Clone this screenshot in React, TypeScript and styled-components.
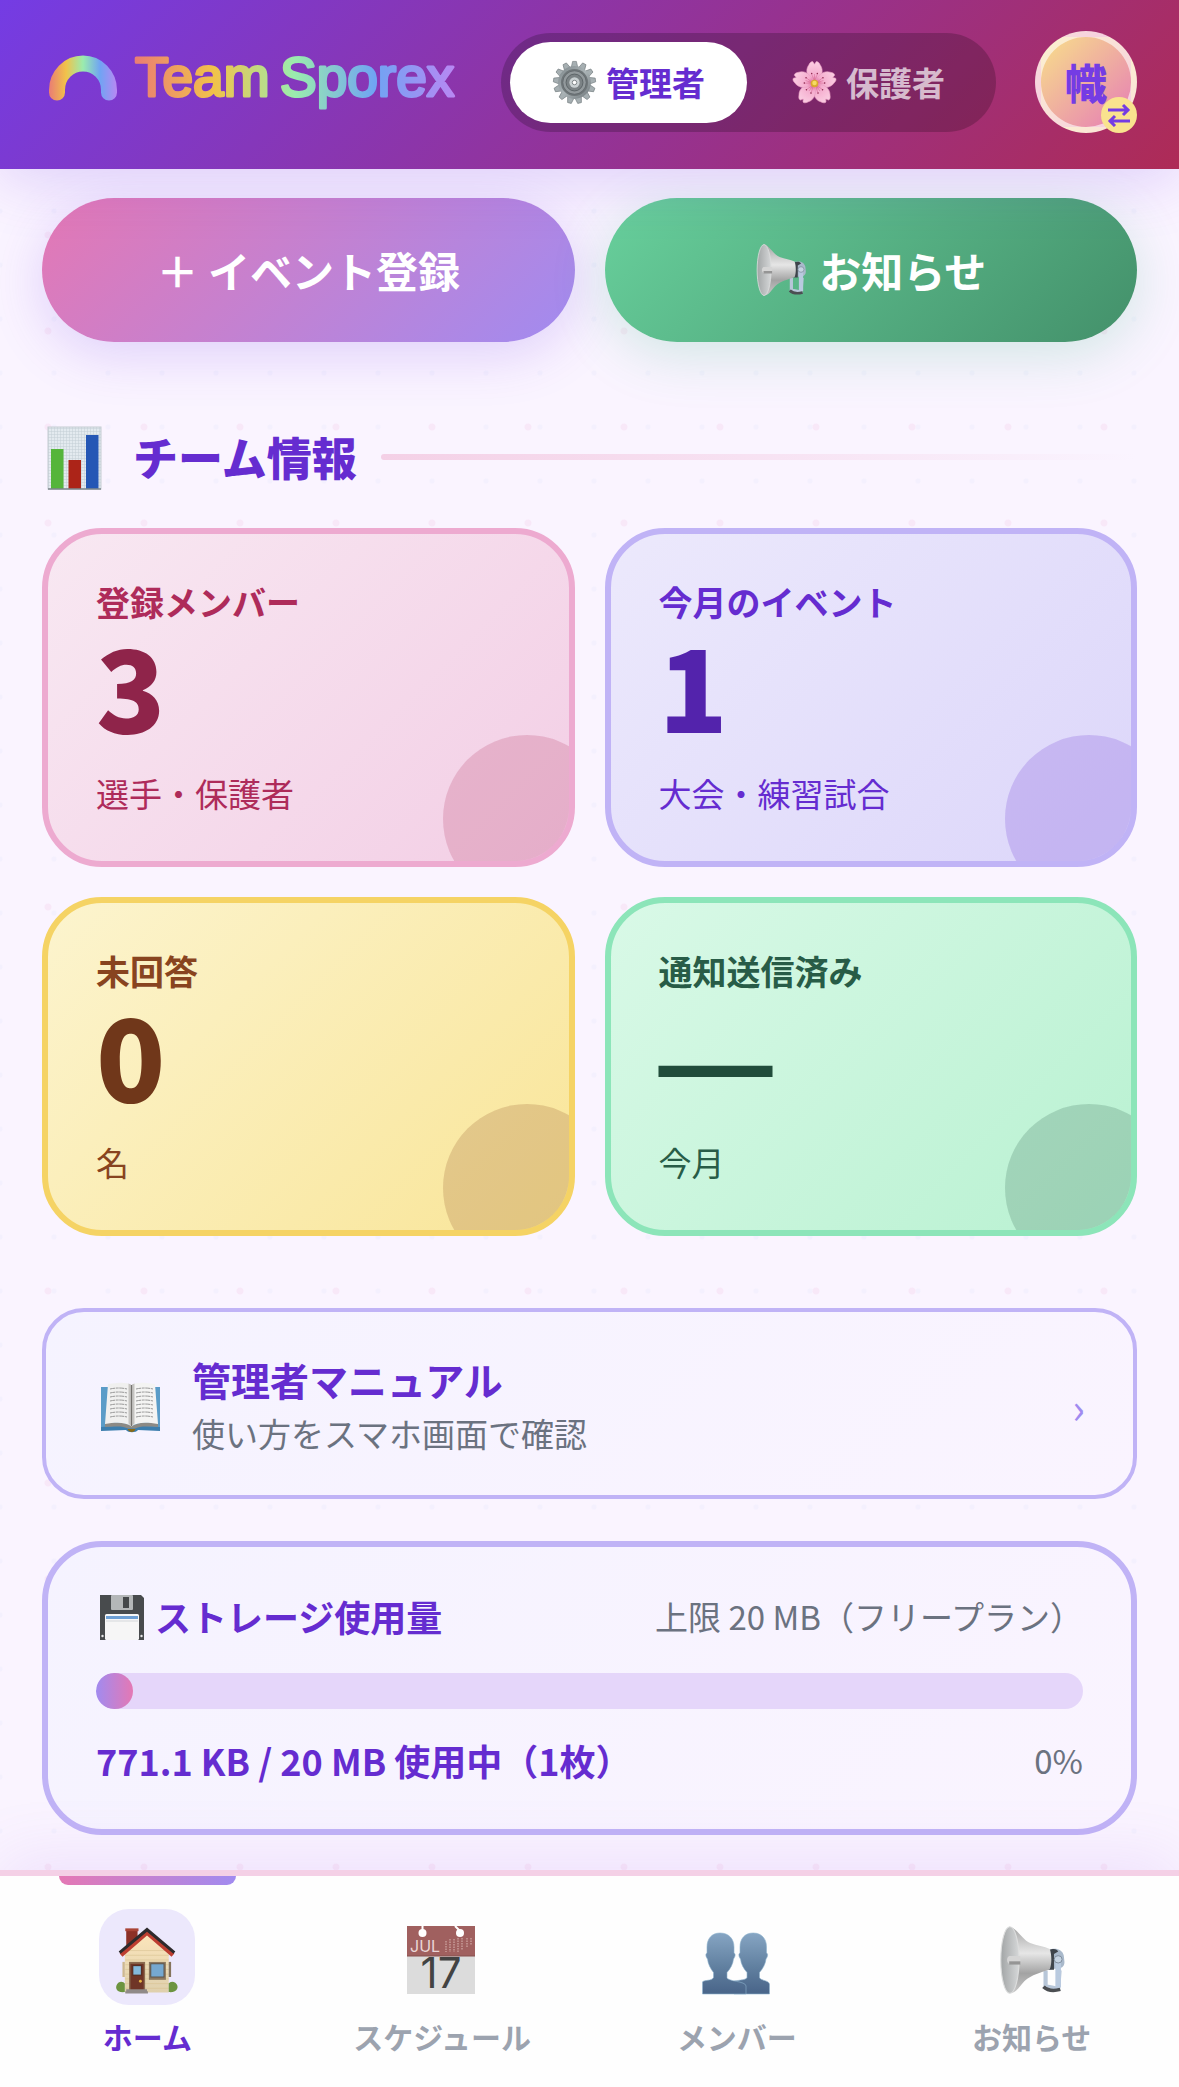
import React from 'react';
import styled, { createGlobalStyle } from 'styled-components';

const GlobalStyle = createGlobalStyle`
  *, *::before, *::after { box-sizing: border-box; }
  body {
    margin: 0;
    background: #faf4ff;
    font-family: "Noto Sans CJK JP", "Noto Sans", sans-serif;
  }
  button { font-family: inherit; border: 0; padding: 0; cursor: pointer; }
  a { color: inherit; text-decoration: none; }
  h2, h3, p { margin: 0; }
  svg { display: block; flex: none; }
`;

const Page = styled.div`
  min-height: 100vh;
  display: flex;
  flex-direction: column;
  background-color: #faf4ff;
  background-image:
    radial-gradient(circle, #f8e8f8 3px, transparent 4px),
    radial-gradient(circle, #f4f0fe 2px, transparent 3px);
  background-size: 96px 96px, 54px 54px;
  background-position: 0 91px, 27px 22px;
`;

/* ---------- Header ---------- */

const Header = styled.header`
  position: relative;
  z-index: 2;
  display: flex;
  align-items: center;
  padding: 31px 42px 36px;
  background: linear-gradient(135deg, #743ce4 0%, #ae2b56 100%);
  box-shadow: 0 12px 60px rgba(116, 60, 228, 0.2);
`;

const LogoLink = styled.a`
  margin-right: auto;
`;

const RoleSwitch = styled.div`
  display: flex;
  gap: 3px;
  padding: 9px;
  margin-right: 39px;
  border-radius: 50px;
  background: rgba(0, 0, 0, 0.2);
`;

const RoleButton = styled.button<{ $active?: boolean }>`
  display: flex;
  align-items: center;
  gap: 9px;
  height: 81px;
  padding: 0 42px;
  border-radius: 42px;
  font-size: 33px;
  font-weight: 700;
  line-height: 48px;
  background: ${(p) => (p.$active ? '#fff' : 'transparent')};
  color: ${(p) => (p.$active ? '#652cd0' : 'rgba(255, 255, 255, 0.7)')};
`;

const Avatar = styled.button`
  position: relative;
  width: 102px;
  height: 102px;
  border: 6px solid rgba(255, 255, 255, 0.6);
  border-radius: 50%;
  background: linear-gradient(135deg, #f8e08a, #e67cb6);
  color: #743ce4;
  font-size: 42px;
  font-weight: 900;
  line-height: 60px;
`;

const AvatarBadge = styled.span`
  position: absolute;
  right: -6px;
  bottom: -6px;
  display: grid;
  place-items: center;
  width: 36px;
  height: 36px;
  border-radius: 50%;
  background: #f9e38e;
`;

/* ---------- Main ---------- */

const Main = styled.main`
  flex: 1;
  padding: 29px 42px 35px;
`;

const TwoColumns = styled.div`
  display: grid;
  grid-template-columns: 1fr 1fr;
  gap: 30px;
`;

const ActionButton = styled.button<{ $from: string; $to: string; $shadow: string }>`
  display: flex;
  align-items: center;
  justify-content: center;
  gap: 12px;
  height: 144px;
  border-radius: 72px;
  background: linear-gradient(135deg, ${(p) => p.$from}, ${(p) => p.$to});
  box-shadow: 0 12px 54px ${(p) => p.$shadow};
  color: #fff;
  font-size: 42px;
  font-weight: 700;
  line-height: 60px;
`;

const SectionHeader = styled.div`
  display: flex;
  align-items: center;
  margin: 80px 0 36px;
`;

const SectionTitle = styled.h2`
  margin: 0 24px 0 27px;
  color: #652cd0;
  font-size: 45px;
  font-weight: 900;
  line-height: 66px;
`;

const SectionRule = styled.span`
  flex: 1;
  height: 6px;
  border-radius: 3px;
  background: linear-gradient(90deg, #f4d0e6, rgba(244, 208, 230, 0));
`;

type Tone = { from: string; to: string; border: string; text: string; strong: string };

const StatCard = styled.section<{ $tone: Tone }>`
  position: relative;
  overflow: hidden;
  padding: 42px 48px;
  border: 6px solid ${(p) => p.$tone.border};
  border-radius: 60px;
  background: linear-gradient(135deg, ${(p) => p.$tone.from}, ${(p) => p.$tone.to});
  color: ${(p) => p.$tone.text};

  &::after {
    content: "";
    position: absolute;
    right: -42px;
    bottom: -42px;
    width: 168px;
    height: 168px;
    border-radius: 50%;
    background: currentColor;
    opacity: 0.2;
  }
`;

const StatLabel = styled.h3`
  font-size: 34px;
  font-weight: 700;
  line-height: 51px;
`;

const StatValue = styled.p<{ $color: string }>`
  color: ${(p) => p.$color};
  font-size: 114px;
  font-weight: 900;
  line-height: 114px;
`;

const EmptyValue = styled.span`
  font-family: "Liberation Sans", Arial, sans-serif;
  line-height: 0;
`;

const StatNote = styled.p`
  margin-top: 27px;
  font-size: 33px;
  line-height: 51px;
`;

const ManualLink = styled.a`
  display: flex;
  align-items: center;
  gap: 32px;
  margin-top: 72px;
  padding: 40px 48px 35px;
  border: 4px solid #c0b3f6;
  border-radius: 42px;
  background: linear-gradient(135deg, #f5f3ff, #faf4ff);
`;

const ManualText = styled.span`
  flex: 1;
  display: flex;
  flex-direction: column;
`;

const ManualTitle = styled.strong`
  color: #652cd0;
  font-size: 39px;
  font-weight: 700;
  line-height: 54px;
`;

const Muted = styled.span`
  color: #6b7280;
  font-size: 33px;
  line-height: 54px;
`;

const Chevron = styled.span`
  color: #a18bf0;
  font-size: 42px;
  line-height: 54px;
`;

const StorageCard = styled.section`
  margin-top: 42px;
  padding: 42px 48px;
  border: 6px solid #c0b3f6;
  border-radius: 60px;
  background: linear-gradient(135deg, #f5f3ff, #faf4ff);
`;

const StorageRow = styled.div`
  display: flex;
  align-items: center;
  justify-content: space-between;
`;

const StorageTitle = styled.h3`
  display: flex;
  align-items: center;
  gap: 8px;
  color: #652cd0;
  font-size: 36px;
  font-weight: 700;
  line-height: 54px;
`;

const StorageUsed = styled.p`
  color: #652cd0;
  font-size: 36px;
  font-weight: 700;
  line-height: 54px;
`;

const Track = styled.div`
  height: 36px;
  margin: 30px 0 24px;
  border-radius: 18px;
  overflow: hidden;
  background: #e5d6fa;
`;

const TrackFill = styled.div`
  height: 100%;
  border-radius: 18px;
  background: linear-gradient(90deg, #a18bf0, #e478b4);
`;

/* ---------- Bottom navigation ---------- */

const BottomNav = styled.nav`
  position: sticky;
  bottom: 0;
  z-index: 2;
  display: grid;
  grid-template-columns: repeat(4, 1fr);
  border-top: 6px solid #f4d0e6;
  background: #fefefe;
  box-shadow: 0 -12px 60px rgba(160, 90, 228, 0.12);
`;

const NavItem = styled.a<{ $active?: boolean }>`
  position: relative;
  display: flex;
  flex-direction: column;
  align-items: center;
  gap: 10px;
  padding: 33px 0 30px;
  color: ${(p) => (p.$active ? '#652cd0' : '#9ca3af')};
  font-size: 30px;
  font-weight: 700;
  line-height: 42px;

  &::before {
    content: "";
    display: ${(p) => (p.$active ? 'block' : 'none')};
    position: absolute;
    top: 0;
    left: 20%;
    width: 60%;
    height: 9px;
    border-radius: 0 0 9px 9px;
    background: linear-gradient(90deg, #e478b4, #a18bf0);
  }
`;

const NavIcon = styled.span<{ $active?: boolean }>`
  display: grid;
  place-items: center;
  width: 96px;
  height: 96px;
  padding-top: 6px;
  border-radius: 30px;
  background: ${(p) => (p.$active ? '#ece8fc' : 'transparent')};
`;

/* ---------- Drawings ---------- */

const RainbowStops = () => (
  <>
    <stop offset="0" stopColor="#ea7c74" />
    <stop offset="0.25" stopColor="#f1c24a" />
    <stop offset="0.5" stopColor="#9aecae" />
    <stop offset="0.75" stopColor="#70a4f3" />
    <stop offset="1" stopColor="#b888f3" />
  </>
);

const Logo = () => (
  <svg width="420" height="102" viewBox="0 -21 420 102" role="img" aria-label="TeamSporex">
    <defs>
      <linearGradient id="arcFill" gradientUnits="userSpaceOnUse" x1="7" y1="0" x2="75" y2="0">
        <RainbowStops />
      </linearGradient>
      <linearGradient id="wordFill" gradientUnits="userSpaceOnUse" x1="92" y1="0" x2="413" y2="0">
        <RainbowStops />
      </linearGradient>
    </defs>
    <path d="M15 40.5V38A26 26.5 0 0 1 67 38V40.5" fill="none" stroke="url(#arcFill)" strokeWidth="16" strokeLinecap="round" />
    <g fontFamily="Liberation Sans, Arial, sans-serif" fontSize="55" fontWeight="400" fill="url(#wordFill)" stroke="url(#wordFill)" strokeWidth="3" strokeLinejoin="round">
      <text x="93" y="44">Team</text>
      <text x="238" y="44">Sporex</text>
    </g>
  </svg>
);

const SwapIcon = () => (
  <svg width="24" height="24" viewBox="0 0 24 24" fill="none" stroke="#743ce4" strokeWidth="3">
    <path d="M1 7H22M16 2l5 5-5 5M23 18H2M8 13l-5 5 5 5" />
  </svg>
);

const Gear = () => (
  <svg width="45" height="45" viewBox="0 0 48 48" aria-hidden="true">
    <defs>
      <linearGradient id="gearFill" x1="0" y1="0" x2="1" y2="1">
        <stop offset="0" stopColor="#7c8589" />
        <stop offset="0.5" stopColor="#aab3b6" />
        <stop offset="1" stopColor="#6d7579" />
      </linearGradient>
    </defs>
    {Array.from({ length: 13 }, (_, i) => (
      <path key={i} d="M20.5 8l1.5-6.5h4L27.5 8z" fill="#a6afb2" stroke="#747d80" strokeWidth="0.7" transform={`rotate(${(i * 360) / 13} 24 24)`} />
    ))}
    <circle cx="24" cy="24" r="17.5" fill="url(#gearFill)" />
    <circle cx="24" cy="24" r="14.5" fill="#6f7679" />
    <circle cx="24" cy="24" r="12.5" fill="#92999c" stroke="#5b6265" strokeWidth="0.8" />
    <circle cx="24" cy="24" r="9" fill="#7b8285" stroke="#5b6265" strokeWidth="1" />
    <circle cx="24" cy="24" r="5.5" fill="#c9d0d2" />
    <circle cx="24" cy="24" r="2.4" fill="#fff" stroke="#62696c" strokeWidth="0.8" />
  </svg>
);

const Blossom = () => (
  <svg width="45" height="45" viewBox="0 0 48 48" aria-hidden="true">
    <defs>
      <radialGradient id="petalFill" gradientUnits="userSpaceOnUse" cx="24" cy="25" r="23">
        <stop offset="0.1" stopColor="#e0709f" />
        <stop offset="0.35" stopColor="#f4abcd" />
        <stop offset="1" stopColor="#fbcde2" />
      </radialGradient>
    </defs>
    {[0, 72, 144, 216, 288].map((a) => (
      <g key={a} transform={`rotate(${a} 24 25)`}>
        <path d="M24 25C16 19 13.5 11 18 5c1.500-3 3-3.500 4.300-3.200L24 4.500l1.700-2.700C27 1.500 28.500 2 30 5c4.500 6 2 14-6 20z" fill="url(#petalFill)" stroke="#e79cc0" strokeWidth="0.6" />
        <path d="M24 23V15M24 23l-3-8M24 23l3-8" stroke="#d4628f" strokeWidth="0.5" />
        <circle cx="21" cy="14.5" r="0.8" fill="#8e2b50" />
        <circle cx="27" cy="14.5" r="0.8" fill="#8e2b50" />
      </g>
    ))}
    <circle cx="24" cy="25" r="4" fill="#d9a92e" />
    <circle cx="24" cy="24.5" r="2.4" fill="#f6dc62" />
  </svg>
);

const Megaphone = ({ size, id }: { size: number; id: string }) => (
  <svg width={size} height={size} viewBox="0 0 52 52" aria-hidden="true">
    <defs>
      <linearGradient id={`${id}Cone`} x1="0" y1="0" x2="0" y2="1">
        <stop offset="0" stopColor="#a5a5a5" />
        <stop offset="0.4" stopColor="#e6e6e6" />
        <stop offset="0.7" stopColor="#a3a3a3" />
        <stop offset="1" stopColor="#c9c9c9" />
      </linearGradient>
      <linearGradient id={`${id}Bell`} x1="0" y1="0" x2="1" y2="0">
        <stop offset="0" stopColor="#a2a5a6" />
        <stop offset="1" stopColor="#d5d7d8" />
      </linearGradient>
    </defs>
    <g transform="scale(1.07 1)">
      <path d="M34 34v12l9 2 1-14" fill="none" stroke="#b7c6d8" strokeWidth="3" />
      <path d="M32.500 46.500c3 3 7 3.500 12 2" fill="none" stroke="#4b4e52" strokeWidth="2.6" />
      <path d="M36 18.500c5-2.500 10-.5 11 4l.5 5c0 4-2.500 5-5.500 5l-6 1z" fill="#a9b9cb" />
      <path d="M36 18.500c4-1.500 6-1 7 1l-3 2v12h-4z" fill="#3e444b" />
      <path d="M41 24h4v23H41z" fill="#b9cadf" />
      <circle cx="43" cy="25.5" r="2.8" fill="#c6d4e3" stroke="#7d8b9b" strokeWidth="0.7" />
      <path d="M8 0.500c5 0 9 10 15 12.500 5 2 10 2.500 14 4.500 1.500 4.500 1.500 12 0 15.500C31 35.500 24 37 19 42c-3.500 3.500-5.500 9.500-11 9.500z" fill={`url(#${id}Cone)`} />
      <ellipse cx="8.500" cy="26" rx="6.500" ry="25.500" fill={`url(#${id}Bell)`} stroke="#dcdddd" strokeWidth="0.8" />
      <path d="M8 23h8v6H8c-2-1-2-5 0-6z" fill="#d5d5d5" />
      <path d="M8 27h8v2.500H8z" fill="#959595" />
    </g>
  </svg>
);

const BarChart = () => (
  <svg width="64" height="70" viewBox="0 -3 64 70" aria-hidden="true">
    <defs>
      <pattern id="chartGrid" width="3" height="3" patternUnits="userSpaceOnUse">
        <rect width="3" height="3" fill="#e3eaef" />
        <path d="M0 0H3M0 0V3" stroke="#c4ced5" strokeWidth="1" />
      </pattern>
    </defs>
    <rect x="6" y="2" width="53" height="62" fill="url(#chartGrid)" stroke="#c3ccd2" strokeWidth="1" />
    <rect x="9" y="24" width="12.5" height="40" fill="#55b53b" />
    <rect x="26.5" y="35" width="12.5" height="29" fill="#ac2418" />
    <rect x="44" y="10" width="12.5" height="54" fill="#2557b5" />
    <path d="M6 64H59" stroke="#7e878c" strokeWidth="1.5" />
  </svg>
);

const Book = () => (
  <svg width="66" height="66" viewBox="-4 -1 66 66" aria-hidden="true">
    <path d="M3 13h60v43l-24-1c-2 3-9 3-11 0l-25 1z" fill="#5a9cc8" />
    <path d="M3 53l25-1.500c2 2 9 2 11 0L63 53v4l-23-1c-2 3-10 3-12 0l-25 1z" fill="#3c7eae" />
    <path d="M7 49c12-1 20-1 27 3 7-4 14-4 26-3v4c-11-1-19-1-23 1.500h-7C26 52 18 52 7 53z" fill="#8c8a85" />
    <path d="M10 10c10-1.500 19-2.500 23.500 1v41.500C28 48 18 48 7 50z" fill="#f0f0ef" />
    <path d="M57 10c-10-1.500-19-2.500-23.500 1v41.500C39 48 48 48 60 50z" fill="#f4f4f3" />
    <path d="M30.500 9.500c2 .5 2.500 1 3 2 .5-1 1-1.500 3-2v40l-3 3-3-3z" fill="#c5c4c1" />
    <path d="M33.500 11v41" stroke="#74726e" strokeWidth="1.2" />
    {[0, 1, 2, 3, 4, 5, 6, 7].map((i) => (
      <g key={i} stroke="#9a9a9a" strokeWidth="1" strokeDasharray="5 0.7 3 0.6" fill="none">
        <path d={`M12 ${15 + i * 4}q9-2 17 0`} />
        <path d={`M38 ${15 + i * 4}q9-2 17 0`} />
      </g>
    ))}
    <path d="M29.500 55c1.500 4 7 4 8 0z" fill="#8a6b16" />
  </svg>
);

const Floppy = () => (
  <svg width="51" height="51" viewBox="0 -1 51 51" aria-hidden="true">
    <path d="M4 3h41l3 3v42H4z" fill="#484b4d" />
    <rect x="15" y="3" width="22" height="15" rx="1" fill="#b4b7b8" />
    <rect x="27" y="5" width="6" height="11" fill="#45484a" />
    <rect x="9" y="22" width="34" height="26" rx="1.5" fill="#f6f6f6" />
    <rect x="10" y="24" width="32" height="3" fill="#6d9fd4" />
    <path d="M10 29H42" stroke="#d4d7da" strokeWidth="1" />
    <circle cx="6.5" cy="44" r="1.2" fill="#e8e8e8" />
    <circle cx="45.5" cy="44" r="1.2" fill="#e8e8e8" />
  </svg>
);

const House = () => (
  <svg width="68" height="68" viewBox="0 0 72 72" aria-hidden="true">
    <defs>
      <linearGradient id="wallFill" x1="0" y1="0" x2="0" y2="1">
        <stop offset="0" stopColor="#fbe5bb" />
        <stop offset="1" stopColor="#dfd0ad" />
      </linearGradient>
    </defs>
    <path d="M14 4h12v12L14 26z" fill="#8c3026" />
    <path d="M13 2.500h14v3H13z" fill="#a94436" />
    <path d="M12.500 30L36 9l23 21v40.500H12.500z" fill="url(#wallFill)" />
    {[26, 31, 36, 41, 46, 51, 56, 61, 66].map((y) => (
      <path key={y} d={`M${Math.max(13, 42 - y)} ${y}H${Math.min(59, 30 + y)}`} stroke="#d8c18f" strokeWidth="0.6" />
    ))}
    <path d="M36 4L7 29l3 3.500L36 10l26 22.500 3-3.500z" fill="#bd3e30" />
    <path d="M36 1.500L6 27l2 2.500L36 6l28 23.500 2-2.500z" fill="#2d2a2c" />
    <rect x="10" y="38" width="2.5" height="16" fill="#cdb890" />
    <rect x="59" y="38" width="2.5" height="16" fill="#85745b" />
    <path d="M12.500 70c-10 1-11-6-7-10 3-2 6-1 7 1zM59 70c9 1 12-6 7-10-3-2-6-1-7 1z" fill="#6c9440" />
    <rect x="17" y="38" width="17" height="31" fill="#8b6b50" />
    <rect x="18.5" y="40" width="14" height="28" fill="#6f3527" />
    <rect x="21" y="42" width="9" height="10" fill="#83b9dc" stroke="#4e2418" strokeWidth="1" />
    <circle cx="29" cy="58.5" r="1.5" fill="#e6b446" />
    <rect x="38" y="38" width="18" height="19" fill="#8c7860" />
    <rect x="40" y="40" width="14" height="14" fill="#76a8d0" stroke="#5c5146" strokeWidth="1" />
    <path d="M14 67h22v2H14zM13 69h24v2.500H13z" fill="#908a88" />
  </svg>
);

const Calendar = () => (
  <svg width="72" height="78" viewBox="1 0 72 78" aria-hidden="true">
    <rect x="2" y="5" width="68" height="68" fill="#dcdcdc" />
    <rect x="2" y="5" width="68" height="30" fill="#a0605f" />
    <path d="M2 35H70" stroke="#87504f" strokeWidth="1" />
    <circle cx="17.5" cy="12" r="4" fill="#fff" />
    <circle cx="55" cy="12" r="4" fill="#fff" />
    <path d="M17.5 5v6M50 5l5 5" stroke="#fff" strokeWidth="2" />
    <g stroke="#c69a98" strokeWidth="1.5" strokeDasharray="1.5 1">
      <path d="M41 20v11M45 18v13M49 18v13M53 17v14M57 17v12M62 17v10M66 17v7" />
    </g>
    <text x="5" y="31" fontFamily="Inter, sans-serif" fontSize="16" fontWeight="400" fill="#ead6d6">JUL</text>
    <text x="36" y="67" textAnchor="middle" fontFamily="Inter, sans-serif" fontSize="42" fontWeight="400" fill="#434343">17</text>
  </svg>
);

const People = () => (
  <svg width="72" height="78" viewBox="1 0 72 78" aria-hidden="true">
    <defs>
      <linearGradient id="peopleFill" gradientUnits="userSpaceOnUse" x1="0" y1="12" x2="0" y2="70">
        <stop offset="0" stopColor="#86a5c3" />
        <stop offset="0.6" stopColor="#607f9f" />
        <stop offset="1" stopColor="#4b678b" />
      </linearGradient>
    </defs>
    <g fill="url(#peopleFill)" stroke="#8eb4cf" strokeWidth="0.6">
      <path d="M53 12c9 0 13.500 6 13.500 14v6c2 1 1 4-.5 6-.5 5-3 9.500-6.500 13.500v5c1 3.500 10 2.500 10 7v9.500H34V60c6-1 12-1 13-3.500v-5C43.500 47.500 41 43 40.500 38c-1.500-2-2.500-5-.5-6v-6c0-8 4.500-14 13-14z" />
      <path d="M20 12c9 0 14 6 14 14v6c2 1 1 4-.5 6-.5 5-3 9.500-6.500 13.500v5c0 4 19 3.500 19 8.500v8H2.500V61c0-2 10-1 11-4.500v-5C10.500 47.500 8 43 7.500 38 6 36 5 33 7 32v-6c0-8 4.500-14 13-14z" />
    </g>
  </svg>
);

/* ---------- Data ---------- */

type Stat = { label: string; value?: string; note: string; tone: Tone };

const stats: Stat[] = [
  { label: '登録メンバー', value: '3', note: '選手・保護者', tone: { from: '#f8e8f2', to: '#f3cee5', border: '#edaad0', text: '#ae2b5a', strong: '#8f244a' } },
  { label: '今月のイベント', value: '1', note: '大会・練習試合', tone: { from: '#ece9fc', to: '#dcd6fa', border: '#c0b3f6', text: '#652cd0', strong: '#5323ac' } },
  { label: '未回答', value: '0', note: '名', tone: { from: '#fcf4ce', to: '#f9e598', border: '#f5d364', text: '#88441f', strong: '#70371a' } },
  { label: '通知送信済み', note: '今月', tone: { from: '#d9f9e7', to: '#b8f1d1', border: '#8ce5b9', text: '#285c47', strong: '#214c3b' } },
];

const navItems = [
  { label: 'ホーム', icon: <House />, active: true },
  { label: 'スケジュール', icon: <Calendar />, active: false },
  { label: 'メンバー', icon: <People />, active: false },
  { label: 'お知らせ', icon: <Megaphone size={68} id="navHorn" />, active: false },
];

const usedPercent = (771.1 / (20 * 1024)) * 100;

export default function App() {
  return (
    <Page>
      <GlobalStyle />
      <Header>
        <LogoLink href="#">
          <Logo />
        </LogoLink>
        <RoleSwitch role="group" aria-label="表示の切り替え">
          <RoleButton type="button" $active aria-pressed="true">
            <Gear />
            管理者
          </RoleButton>
          <RoleButton type="button" aria-pressed="false">
            <Blossom />
            保護者
          </RoleButton>
        </RoleSwitch>
        <Avatar type="button">
          幟
          <AvatarBadge>
            <SwapIcon />
          </AvatarBadge>
        </Avatar>
      </Header>

      <Main>
        <TwoColumns>
          <ActionButton type="button" $from="#e478b4" $to="#a18bf0" $shadow="rgba(116, 60, 228, 0.2)">
            ＋ イベント登録
          </ActionButton>
          <ActionButton type="button" $from="#68d09c" $to="#43906a" $shadow="rgba(64, 180, 130, 0.22)">
            <Megaphone size={52} id="buttonHorn" />
            お知らせ
          </ActionButton>
        </TwoColumns>

        <SectionHeader>
          <BarChart />
          <SectionTitle>チーム情報</SectionTitle>
          <SectionRule />
        </SectionHeader>

        <TwoColumns>
          {stats.map((s) => (
            <StatCard key={s.label} $tone={s.tone}>
              <StatLabel>{s.label}</StatLabel>
              <StatValue $color={s.tone.strong}>{s.value ?? <EmptyValue>—</EmptyValue>}</StatValue>
              <StatNote>{s.note}</StatNote>
            </StatCard>
          ))}
        </TwoColumns>

        <ManualLink href="#">
          <Book />
          <ManualText>
            <ManualTitle>管理者マニュアル</ManualTitle>
            <Muted>使い方をスマホ画面で確認</Muted>
          </ManualText>
          <Chevron>›</Chevron>
        </ManualLink>

        <StorageCard>
          <StorageRow>
            <StorageTitle>
              <Floppy />
              ストレージ使用量
            </StorageTitle>
            <Muted>上限 20 MB（フリープラン）</Muted>
          </StorageRow>
          <Track role="progressbar" aria-label="ストレージ使用量" aria-valuemin={0} aria-valuemax={100} aria-valuenow={Math.floor(usedPercent)}>
            <TrackFill style={{ width: `${usedPercent}%` }} />
          </Track>
          <StorageRow>
            <StorageUsed>771.1 KB / 20 MB 使用中（1枚）</StorageUsed>
            <Muted>0%</Muted>
          </StorageRow>
        </StorageCard>
      </Main>

      <BottomNav>
        {navItems.map((n) => (
          <NavItem key={n.label} href="#" $active={n.active} aria-current={n.active ? 'page' : undefined}>
            <NavIcon $active={n.active}>{n.icon}</NavIcon>
            {n.label}
          </NavItem>
        ))}
      </BottomNav>
    </Page>
  );
}
